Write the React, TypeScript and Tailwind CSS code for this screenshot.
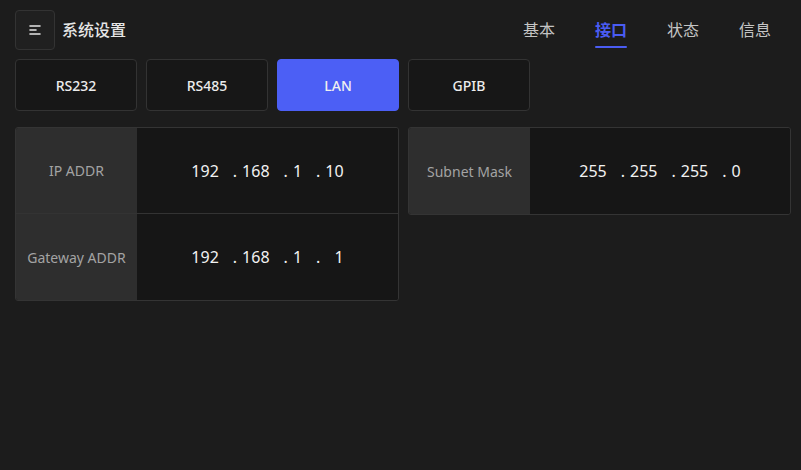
import { useState } from "react"

const tabs = ["基本", "接口", "状态", "信息"]
const ports = ["RS232", "RS485", "LAN", "GPIB"]

function MenuIcon() {
  return (
    <svg width="14" height="12" viewBox="0 0 14 12" fill="none">
      <path d="M2 2h10M2 6h6M2 10h10" stroke="#e5e5e5" strokeWidth="1.6" strokeLinecap="round" />
    </svg>
  )
}

// octets are shown in fixed-width digit cells; a figure space keeps short fields aligned
function IpValue({ parts }: { parts: string[] }) {
  return (
    <div className="flex items-center whitespace-pre text-[16px] text-[#f2f2f2] tabular-nums">
      {parts.map((p, i) => (
        <div key={i} className="flex items-center">
          {i > 0 && <span className="ml-[14px] mr-[5px]">.</span>}
          <span>{p}</span>
        </div>
      ))}
    </div>
  )
}

function Row({ label, parts, last }: { label: string; parts: string[]; last?: boolean }) {
  return (
    <div className={`flex h-[86px] ${last ? "" : "border-b border-[#333]"}`}>
      <div className="flex w-[121px] shrink-0 items-center justify-center bg-[#2e2e2e] text-[14px] text-[#a3a3a3]">
        {label}
      </div>
      <div className="flex flex-1 items-center justify-center bg-[#161616]">
        <IpValue parts={parts} />
      </div>
    </div>
  )
}

export default function App() {
  const [tab, setTab] = useState(1)
  const [port, setPort] = useState(2)

  return (
    <div
      className="h-[470px] w-[801px] overflow-hidden bg-[#1c1c1c] text-white"
      style={{ fontFamily: '"Noto Sans", "Noto Sans CJK SC", sans-serif' }}
    >
      <div className="flex h-[59px] items-center justify-between pl-[15px] pr-[30px]">
        <div className="flex items-center gap-[7px]">
          <button className="flex h-[40px] w-[40px] items-center justify-center rounded-[4px] border border-[#333] bg-[#202020]">
            <MenuIcon />
          </button>
          <span className="text-[16px] font-medium text-[#e6e6e6]">系统设置</span>
        </div>
        <div className="flex gap-[40px] self-stretch">
          {tabs.map((t, i) => (
            <button
              key={t}
              onClick={() => setTab(i)}
              className={`relative flex items-center text-[16px] ${
                i === tab ? "font-semibold text-[#4a5cf2]" : "text-[#c4c4c4]"
              }`}
            >
              {t}
              {i === tab && <span className="absolute left-0 right-0 top-[46px] h-[2px] rounded bg-[#4a5cf2]" />}
            </button>
          ))}
        </div>
      </div>

      <div className="flex gap-[9px] px-[15px]">
        {ports.map((p, i) => (
          <button
            key={p}
            onClick={() => setPort(i)}
            className={`h-[52px] w-[122px] rounded-[4px] border text-[14px] font-medium ${
              i === port ? "border-[#4c5ff5] bg-[#4c5ff5] text-[#f0f0f0]" : "border-[#333] bg-[#171717] text-[#ececec]"
            }`}
          >
            {p}
          </button>
        ))}
      </div>

      <div className="mt-[16px] flex items-start gap-[9px] pl-[15px] pr-[10px]">
        <div className="w-[384px] overflow-hidden rounded-[3px] border border-[#343434]">
          <Row label="IP ADDR" parts={["192", "168", "1", "10"]} />
          <Row label="Gateway ADDR" parts={["192", "168", "1", "\u20071"]} last />
        </div>
        <div className="flex-1 overflow-hidden rounded-[3px] border border-[#343434]">
          <Row label="Subnet Mask" parts={["255", "255", "255", "0"]} last />
        </div>
      </div>
    </div>
  )
}
